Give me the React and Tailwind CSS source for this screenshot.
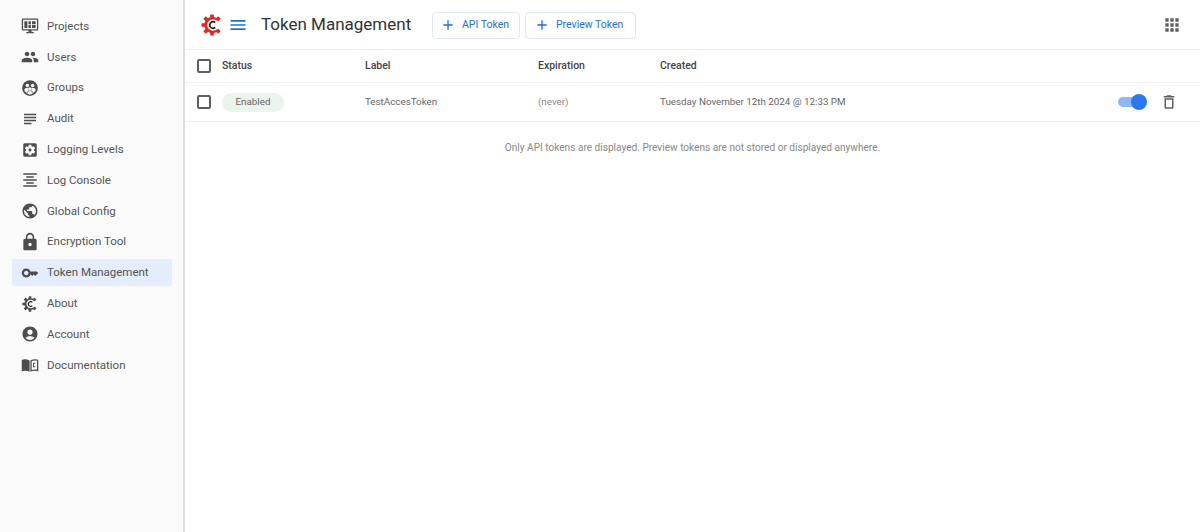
import { MdPeople, MdSubject, MdSettingsApplications, MdFormatAlignCenter, MdPublic, MdLock, MdKey, MdAccountCircle, MdMenu, MdAdd, MdApps, MdOutlineDelete } from 'react-icons/md';

const ProjectsIcon = (props) => (
  <svg viewBox="0 0 24 24" fill="currentColor" {...props}>
    <path fillRule="evenodd" d="M2.500 2h19A1.500 1.500 0 0 1 23 3.500v13a1.500 1.500 0 0 1-1.500 1.500H14v2h3v1.500H7V20h3v-2H2.500A1.500 1.500 0 0 1 1 16.500v-13A1.500 1.500 0 0 1 2.500 2zm.2 1.700v12.600h18.600V3.700H2.700z" />
    <path d="M4.500 5.500h4v9h-4zM10 5.500h3.200v4H10zM14.700 5.500h4.800v4h-4.800zM10 10.800h3.200v3.700H10zM14.700 10.800h4.800v3.700h-4.800z" />
  </svg>
);

const GroupsIcon = (props) => (
  <svg viewBox="0 0 24 24" {...props}>
    <circle cx="12" cy="12" r="10.500" fill="currentColor" />
    <g fill="#fafafa">
      <circle cx="8.500" cy="8.500" r="2.300" />
      <circle cx="15.500" cy="8.500" r="2.300" />
      <circle cx="12" cy="13.200" r="2.300" />
      <path d="M4.500 14.500c0-1.800 1.800-2.800 4-2.800.6 0 1 .1 1.400.2-.6 1.500.1 2.700.6 3.300-1.500.6-2.300 1.800-2.400 3.300-1.500-.8-3.600-2-3.600-4z" />
      <path d="M19.500 14.500c0-1.800-1.800-2.800-4-2.800-.6 0-1 .1-1.400.2.600 1.500-.1 2.700-.6 3.300 1.500.6 2.300 1.800 2.400 3.300 1.500-.8 3.600-2 3.600-4z" />
      <path d="M8.500 19.500c0-2 1.500-3.500 3.500-3.500s3.500 1.500 3.500 3.500c-1 .7-2.200 1-3.500 1s-2.500-.3-3.500-1z" />
    </g>
  </svg>
);

const GearC = ({ className, color = 'currentColor', inner = 'none' }) => (
  <svg viewBox="0 0 24 24" className={className}>
    <g fill={color}>
      <rect x="10" y="0.500" width="4" height="4" rx="0.500" />
      <rect x="10" y="0.500" width="4" height="4" rx="0.500" transform="rotate(45 12 12)" />
      <rect x="10" y="0.500" width="4" height="4" rx="0.500" transform="rotate(135 12 12)" />
      <rect x="10" y="0.500" width="4" height="4" rx="0.500" transform="rotate(180 12 12)" />
      <rect x="10" y="0.500" width="4" height="4" rx="0.500" transform="rotate(225 12 12)" />
      <rect x="10" y="0.500" width="4" height="4" rx="0.500" transform="rotate(270 12 12)" />
      <rect x="10" y="0.500" width="4" height="4" rx="0.500" transform="rotate(315 12 12)" />
    </g>
    <path d="M19 5.700A9 9 0 1 0 19 18.300L15.500 15.500A5.500 5.500 0 0 1 7 12a5.500 5.500 0 0 1 8.500-3.500z" fill={color} />
    <circle cx="13" cy="12" r="6.300" fill={inner} />
    <path d="M15.500 9.500a3.500 3.500 0 1 0 0 5" fill="none" stroke={inner === 'none' ? color : '#1f1f1f'} strokeWidth="1.800" />
  </svg>
);

const AboutIcon = ({ className }) => (
  <span className={`flex items-center justify-center ${className}`}>
    <GearC className="w-[16px] h-[16px]" inner="#fafafa" color="#4d4d4d" />
  </span>
);

const LockIcon = ({ className }) => (
  <span className={`flex items-center justify-center ${className}`}>
    <MdLock className="w-[20px] h-[20px] shrink-0" />
  </span>
);

const DocsIcon = (props) => (
  <svg viewBox="0 0 24 24" fill="currentColor" {...props}>
    <path d="M1 5c3-1 7-1 10.500 1v15C8 19.500 4 19.500 1 20.500V5z" />
    <path fillRule="evenodd" d="M12.500 6C16 4 20 4 23 5v15.500c-3-1-7-1-10.500.5V6zm1.700 1v11.700c2.300-.8 5-1 7.100-.6V6.300c-2.300-.4-5-.2-7.100.7z" />
    <path d="M19 9v1.200h-1.800v3.600H19V15h-3V9z" />
  </svg>
);

const navItems = [
  { label: 'Projects', icon: ProjectsIcon },
  { label: 'Users', icon: MdPeople },
  { label: 'Groups', icon: GroupsIcon },
  { label: 'Audit', icon: MdSubject },
  { label: 'Logging Levels', icon: MdSettingsApplications },
  { label: 'Log Console', icon: MdFormatAlignCenter },
  { label: 'Global Config', icon: MdPublic },
  { label: 'Encryption Tool', icon: LockIcon },
  { label: 'Token Management', icon: MdKey, active: true },
  { label: 'About', icon: AboutIcon },
  { label: 'Account', icon: MdAccountCircle },
  { label: 'Documentation', icon: DocsIcon },
];

function Checkbox() {
  return <span className="block w-[14px] h-[14px] rounded-[2px] border-2 border-[#5f5f5f] bg-white" />;
}

function HeaderButton({ label, className }) {
  return (
    <button className={`flex items-center h-[27px] rounded-[4px] border border-[#e1e7f2] bg-white text-[#1f6fd6] text-[10.500px] ${className}`}>
      <MdAdd className="w-[16px] h-[16px] shrink-0" />
      <span>{label}</span>
    </button>
  );
}

export default function App() {
  return (
    <div className="flex h-[532px] w-[1200px] overflow-hidden bg-white font-['Roboto',sans-serif] text-[#555]">
      <aside className="w-[185px] shrink-0 bg-[#fafafa] border-r-2 border-[#dfdfdf] pt-[13px] pl-[12px] pr-[11px]">
        {navItems.map(({ label, icon: Icon, active }) => (
          <div
            key={label}
            className={`flex items-center h-[26.8px] mb-[4px] pl-[9px] rounded-[2px] text-[11.500px] text-[#555] ${active ? 'bg-[#e3edfb]' : ''}`}
          >
            <Icon className="w-[18px] h-[18px] shrink-0 text-[#4d4d4d]" />
            <span className="ml-[8px]">{label}</span>
          </div>
        ))}
      </aside>

      <main className="flex-1 min-w-0">
        <header className="flex items-center h-[50px] border-b border-[#efefef] pl-[16px] pr-[18px]">
          <GearC className="w-[22px] h-[22px] shrink-0" color="#e5261f" inner="#ffffff" />
          <MdMenu className="w-[20px] h-[20px] ml-[5px] text-[#1f6fd6] shrink-0" />
          <h1 className="ml-[13px] mt-[1px] text-[17px] text-[#333] whitespace-nowrap w-[171px]">Token Management</h1>
          <div className="flex gap-[5px] mt-[1px]">
            <HeaderButton label="API Token" className="w-[88px] pl-[7px] gap-[6px]" />
            <HeaderButton label="Preview Token" className="w-[111px] pl-[8px] gap-[6px]" />
          </div>
          <MdApps className="w-[20px] h-[20px] ml-auto text-[#5f5f5f]" />
        </header>

        <div className="flex items-center h-[33px] border-b border-[#efefef] text-[10.500px] font-medium text-[#444]">
          <div className="w-[37px] pl-[12px]"><Checkbox /></div>
          <div className="w-[143px]">Status</div>
          <div className="w-[173px]">Label</div>
          <div className="w-[122px]">Expiration</div>
          <div>Created</div>
        </div>

        <div className="flex items-center h-[39px] border-b border-[#efefef] text-[9.800px] text-[#666]">
          <div className="w-[37px] pl-[12px]"><Checkbox /></div>
          <div className="w-[143px]">
            <span className="inline-flex items-center justify-center w-[62px] h-[19px] rounded-full bg-[#e9f4ec] text-[#666]">Enabled</span>
          </div>
          <div className="w-[173px] pt-[1px]">TestAccesToken</div>
          <div className="w-[122px] pt-[1px] text-[#888]">(never)</div>
          <div className="pt-[1px]">Tuesday November 12th 2024 @ 12:33 PM</div>
          <div className="ml-auto flex items-center pr-[22px]">
            <span className="relative block w-[26px] h-[10px] rounded-full bg-[#8db8f5]">
              <span className="absolute right-[-3px] top-[-3px] w-[16px] h-[16px] rounded-full bg-[#2d78ee]" />
            </span>
            <MdOutlineDelete className="w-[18px] h-[18px] ml-[16px] text-[#5f5f5f]" />
          </div>
        </div>

        <p className="mt-[18px] text-center text-[10.100px] text-[#888]">
          Only API tokens are displayed. Preview tokens are not stored or displayed anywhere.
        </p>
      </main>
    </div>
  );
}
